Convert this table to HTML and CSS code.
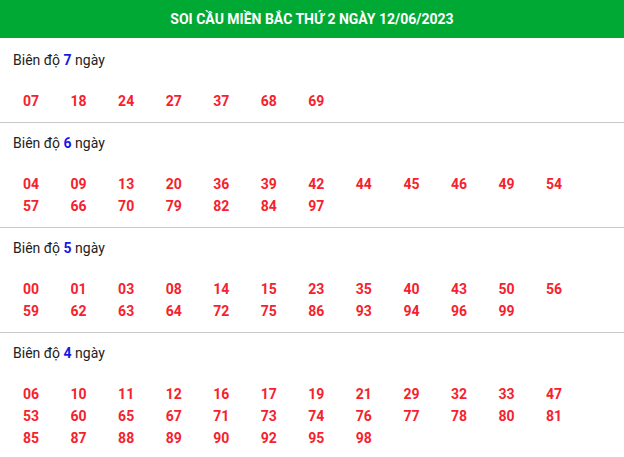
FILE: index.html
```html
<!DOCTYPE html>
<html lang="vi">
<head>
<meta charset="utf-8">
<link rel="stylesheet" href="styles.css">
</head>
<body>
<div class="box">
  <div class="head">SOI CẦU MIỀN BẮC THỨ 2 NGÀY 12/06/2023</div>
  <div class="sec first">
    <div class="title">Biên độ <b>7</b> ngày</div>
    <div class="nums">
      <span>07</span><span>18</span><span>24</span><span>27</span><span>37</span><span>68</span><span>69</span>
    </div>
  </div>
  <div class="sec">
    <div class="title">Biên độ <b>6</b> ngày</div>
    <div class="nums">
      <span>04</span><span>09</span><span>13</span><span>20</span><span>36</span><span>39</span><span>42</span><span>44</span><span>45</span><span>46</span><span>49</span><span>54</span>
      <span>57</span><span>66</span><span>70</span><span>79</span><span>82</span><span>84</span><span>97</span>
    </div>
  </div>
  <div class="sec">
    <div class="title">Biên độ <b>5</b> ngày</div>
    <div class="nums">
      <span>00</span><span>01</span><span>03</span><span>08</span><span>14</span><span>15</span><span>23</span><span>35</span><span>40</span><span>43</span><span>50</span><span>56</span>
      <span>59</span><span>62</span><span>63</span><span>64</span><span>72</span><span>75</span><span>86</span><span>93</span><span>94</span><span>96</span><span>99</span>
    </div>
  </div>
  <div class="sec">
    <div class="title">Biên độ <b>4</b> ngày</div>
    <div class="nums">
      <span>06</span><span>10</span><span>11</span><span>12</span><span>16</span><span>17</span><span>19</span><span>21</span><span>29</span><span>32</span><span>33</span><span>47</span>
      <span>53</span><span>60</span><span>65</span><span>67</span><span>71</span><span>73</span><span>74</span><span>76</span><span>77</span><span>78</span><span>80</span><span>81</span>
      <span>85</span><span>87</span><span>88</span><span>89</span><span>90</span><span>92</span><span>95</span><span>98</span>
    </div>
  </div>
</div>
</body>
</html>
```

FILE: styles.css
```css
html, body {
  margin: 0;
  padding: 0;
  background: #fff;
}
body {
  font-family: Roboto, "Liberation Sans", Arial, sans-serif;
  color: #222;
}
.head {
  background: #00a934;
  color: #fff;
  font-weight: 700;
  font-size: 14px;
  height: 38px;
  line-height: 38px;
  text-align: center;
}
.sec {
  padding: 10px 0 10px;
  border-bottom: 1px solid #c8c8c8;
}
.sec.first {
  padding-top: 12px;
}
.title {
  padding-left: 13px;
  font-size: 14px;
  line-height: 20px;
}
.title b {
  color: #1818e6;
  font-weight: 700;
}
.nums {
  margin-top: 20px;
  padding-left: 23px;
  display: grid;
  grid-template-columns: repeat(12, 47.55px);
}
.nums span {
  color: #f5222d;
  font-weight: 700;
  font-size: 14px;
  line-height: 22px;
}
```
